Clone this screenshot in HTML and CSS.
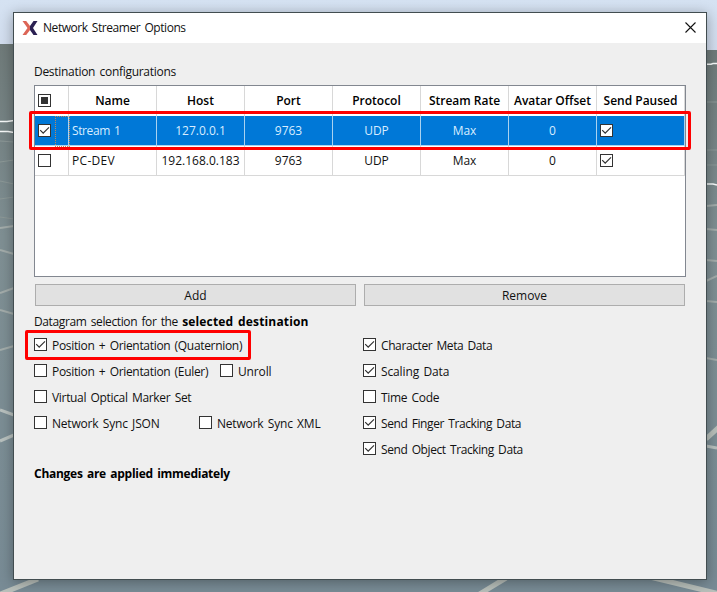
FILE: index.html
```html
<!DOCTYPE html>
<html lang="en">
<head>
<meta charset="utf-8">
<title>Network Streamer Options</title>
<link rel="stylesheet" href="styles.css">
</head>
<body>
<svg class="scene" width="717" height="592" viewBox="0 0 717 592" aria-hidden="true">
  <defs>
    <linearGradient id="sky" x2="0" y2="1"><stop offset="0" stop-color="#d5e2f2"/><stop offset="1" stop-color="#d1dced"/></linearGradient>
    <linearGradient id="ground" x2="0" y2="1"><stop offset="0" stop-color="#6f7a79"/><stop offset=".35" stop-color="#7f8f93"/><stop offset="1" stop-color="#788b95"/></linearGradient>
  </defs>
  <path fill="url(#sky)" d="M0 0h717v51H0z"/>
  <path fill="url(#ground)" d="M0 44h360v6h357v542H0z"/>
  <g fill="none" stroke="#8c9897">
    <path d="M0 141l14 1M0 162l14-2M0 181l14 3M0 199l14-2M0 217l14 2M706 102h11M706 150h11M706 165h11"/>
    <path stroke="#a3acaa" stroke-width="2" d="M0 228l14-2M0 250l14 4M0 293l14-5M0 310l14 4M0 350l14-4M706 206l11-1M706 229l11 1M706 260l11 1M706 281l11-5M706 301l11 1M706 358l11 2"/>
    <path stroke="#b8c0be" stroke-width="3" d="M0 410l14 5M0 441l14-6M706 446l11 2"/>
    <path stroke="#b8bfba" stroke-width="5" d="M706 439l13-12M-2 595l40-16M478 595l28-17M650 577l70 17"/>
    <path stroke="#f8fafa" stroke-width="1.500" d="M0 121.500h7l7-1M0 131.500h8l6 1M706 64.300h5l2-.8h4M706 184h7l4 1"/>
  </g>
</svg>
<main class="window">
  <header class="titlebar">
    <svg class="logo" width="16" height="14" viewBox="0 0 16 14"><path fill="#dc6557" d="M.5 0h3.700l3.800 5v4l-3.800 5H.5l5-7z"/><path fill="#2b2052" d="M15.500 0h-4L8 5v4l3.500 5h4L11 7z"/></svg>
    <h1>Network Streamer Options</h1>
    <svg class="close" width="11" height="11" viewBox="0 0 11 11"><path d="M.5.5l10 10M10.500.5l-10 10"/></svg>
  </header>
  <p class="caption">Destination configurations</p>
  <div class="table-wrap">
    <table>
      <colgroup><col class="first"><col span="7"></colgroup>
      <thead><tr>
        <th class="c"><i class="box mixed"></i></th><th>Name</th><th>Host</th><th>Port</th><th>Protocol</th><th>Stream Rate</th><th>Avatar Offset</th><th>Send Paused</th>
      </tr></thead>
      <tbody>
        <tr class="selected"><td class="c focus"><i class="box on"></i></td><td class="name">Stream 1</td><td>127.0.0.1</td><td>9763</td><td>UDP</td><td>Max</td><td>0</td><td class="c"><i class="box on"></i></td></tr>
        <tr><td class="c"><i class="box"></i></td><td class="name wide">PC-DEV</td><td>192.168.0.183</td><td>9763</td><td>UDP</td><td>Max</td><td>0</td><td class="c"><i class="box on"></i></td></tr>
      </tbody>
    </table>
    <div class="mark mark-row"></div>
  </div>
  <div class="buttons"><button>Add</button><button>Remove</button></div>
  <p class="datagram"><span>Datagram selection for the </span><b>selected destination</b></p>
  <div class="options">
    <div class="column">
      <div class="line"><label><i class="box on"></i><span>Position + Orientation (Quaternion)</span></label><div class="mark mark-option"></div></div>
      <div class="line"><label class="euler"><i class="box"></i><span>Position + Orientation (Euler)</span></label><label class="loose"><i class="box"></i><span>Unroll</span></label></div>
      <div class="line"><label><i class="box"></i><span>Virtual Optical Marker Set</span></label></div>
      <div class="line sync"><label class="json"><i class="box"></i><span>Network Sync JSON</span></label><label><i class="box"></i><span>Network Sync XML</span></label></div>
    </div>
    <div class="column">
      <div class="line tight"><label><i class="box on"></i><span>Character Meta Data</span></label></div>
      <div class="line loose"><label><i class="box on"></i><span>Scaling Data</span></label></div>
      <div class="line"><label><i class="box"></i><span>Time Code</span></label></div>
      <div class="line tight"><label><i class="box on"></i><span>Send Finger Tracking Data</span></label></div>
      <div class="line tight"><label><i class="box on"></i><span>Send Object Tracking Data</span></label></div>
    </div>
  </div>
  <p class="applied"><b>Changes are applied immediately</b></p>
</main>
</body>
</html>
```
FILE: styles.css
```css
* { box-sizing: border-box; }
body { margin: 0; width: 717px; height: 592px; overflow: hidden; position: relative; padding: 12px 10px 12px 13px; font: 12px/18px "Open Sans", "Noto Sans", sans-serif; color: #111; }
.scene { position: absolute; inset: 0; z-index: -1; }
.window { width: 694px; height: 568px; border: 1px solid #424d50; background: #efefef; box-shadow: 0 2px 12px rgba(0,0,0,.32); }
h1, p { margin: 0; font-size: 12px; font-weight: 400; white-space: nowrap; word-spacing: 1.5px; }
h1 { letter-spacing: -.44px; }
.titlebar { height: 30px; background: #fff; display: flex; align-items: center; padding: 0 10px 0 8px; }
.logo { margin-right: 5px; }
.close { margin-left: auto; position: relative; top: -1px; fill: none; stroke: #111; stroke-width: 1.1; }
.caption { margin: 20px 0 0 20px; height: 22px; letter-spacing: -.29px; }
.table-wrap { position: relative; margin-left: 20px; width: 652px; height: 192px; background: #fff; border: 1px solid #828790; }
table { table-layout: fixed; border-collapse: separate; border-spacing: 0; width: 650px; }
col { width: 88px; }
col.first { width: 34px; }
th, td { height: 30px; padding: 0; text-align: center; border-right: 1px solid #d8d8d8; white-space: nowrap; }
th { font-weight: 600; color: #000; }
td { border-bottom: 1px solid #d8d8d8; }
td.name { text-align: left; padding-left: 3px; word-spacing: 1.5px; letter-spacing: -.4px; }
td.wide { letter-spacing: .3px; }
.c { text-align: left; padding-left: 3px; }
.selected td { background: #0078d7; color: #d9edff; border-color: #a9d2f0; }
.focus { position: relative; }
.focus::after { content: ""; position: absolute; left: 20px; top: 0; width: 13px; height: 29px; border: 1px dotted #c08a58; }
.box { display: block; flex: none; width: 13px; height: 13px; border: 1px solid #333; background: #fff; position: relative; }
.mixed { top: -1px; }
.on::after { content: ""; position: absolute; left: 0; top: 0; width: 11px; height: 11px; background: #333; clip-path: polygon(.8px 5.5px, 1.6px 4.7px, 4.2px 7.3px, 9.6px 1.9px, 10.4px 2.7px, 4.2px 8.9px); }
.mixed::after { content: ""; position: absolute; inset: 2px; background: #333; }
.mark { position: absolute; border: 3px solid #f00; border-radius: 2px; }
.mark-row { left: -6px; top: 25px; width: 662px; height: 39px; }
.buttons { display: flex; gap: 8px; margin: 7px 0 0 21px; width: 650px; }
button { flex: 1; height: 22px; padding: 1px 0 0; border: 1px solid #adadad; background: #e1e1e1; font: inherit; color: #111; }
.datagram { margin: 7px 0 0 20px; height: 18px; white-space: pre; letter-spacing: -.38px; }
.datagram b { letter-spacing: .16px; }
.options { display: grid; grid-template-columns: 329px 300px; margin: 2px 0 0 20px; word-spacing: 1.5px; letter-spacing: -.32px; }
.line { height: 26px; display: flex; align-items: center; position: relative; white-space: nowrap; }
.loose { letter-spacing: -.13px; }
.sync { letter-spacing: -.2px; }
.tight { letter-spacing: -.4px; }
label { display: flex; align-items: center; gap: 5px; }
label .box { top: -1.5px; }
.euler { width: 186px; }
.json { width: 165px; }
.mark-option { left: -9px; top: -3px; width: 226px; height: 30px; }
.applied { margin: 2px 0 0 20px; letter-spacing: -.27px; }
b { font-weight: 700; color: #000; }
```
